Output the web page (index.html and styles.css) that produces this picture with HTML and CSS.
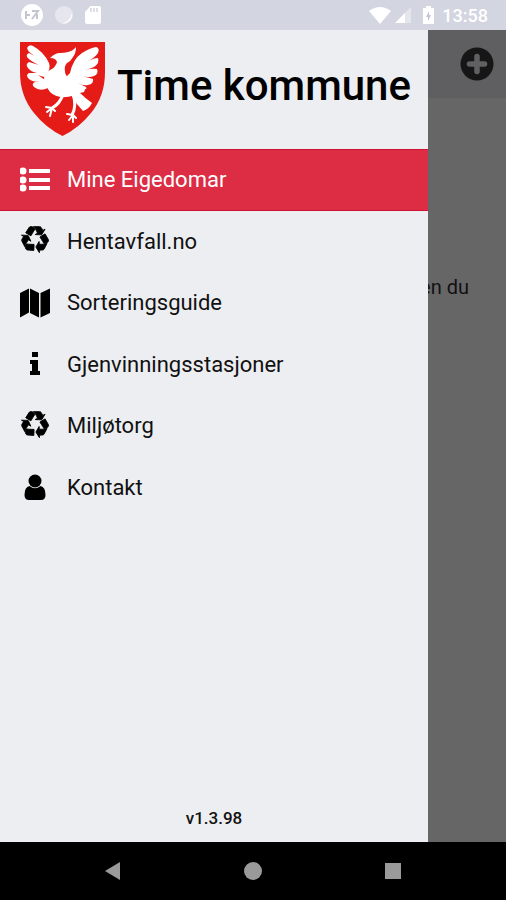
FILE: index.html
```html
<!DOCTYPE html>
<html lang="nn">
<head>
<meta charset="utf-8">
<meta name="viewport" content="width=device-width, initial-scale=1">
<title>Time kommune</title>
<link rel="stylesheet" href="styles.css">
</head>
<body>
<svg class="defs" aria-hidden="true">
  <symbol id="recycle" viewBox="-80 -30 1952 1952"><path stroke="#000" stroke-width="60" stroke-linejoin="round" d="M836 1169l-15 368-2 22-420-29q-36-3-67-31.5t-47-65.5q-11-27-14.5-55t4-65 12-55 21.5-64 19-53q78 12 509 28zm-387-586l180 379-147-92q-63 72-111.5 144.5t-72.5 125-39.5 94.5-18.500 63l-4 21-190-357q-17-26-18-56t6-47l8-18q35-63 114-188l-140-86zm1231 517l-188 359q-12 29-36.500 46.500t-43.500 20.500l-18 4q-71 7-219 12l8 164-230-367 211-362 7 173q170 16 283 5t170-33zm-785-924q-47 63-265 435l-317-187-19-12 225-356q20-31 60-45t80-10q24 2 48.500 12t42 21 41.500 33 36 34.500 36 39.500 32 35zm655 307l212 363q18 37 12.500 76t-27.500 74q-13 20-33 37t-38 28-48.500 22-47 16-51.500 14-46 12q-34-72-265-436l313-195zm-143-226l142-83-220 373-419-20 151-86q-34-89-75-166t-75.500-123.500-64.500-80-47-46.500l-17-13 405 1q31-3 58 10.500t39 28.500l11 15q39 61 112 190z"/></symbol>
</svg>
<div class="phone">
  <header class="status">
    <div class="status-group">
      <svg width="22" height="22" viewBox="0 0 22 22"><circle cx="11" cy="11" r="11" fill="#fff"/><path d="M5 7v8M5 11h4M11 7h6l-3 4M16 10v5M11 15l3-4" fill="none" stroke="#c3c5d2" stroke-width="2"/></svg>
      <svg width="18" height="18" viewBox="0 0 18 18"><circle cx="9" cy="9" r="9" fill="#e6e7ee"/><path d="M17 7a9 9 0 0 1-10 10.500Q15 16 17 7z" fill="#fff"/></svg>
      <svg width="16" height="18" viewBox="0 0 16 18"><path d="M5.500 0H14q2 0 2 2v14q0 2-2 2H2q-2 0-2-2V6z" fill="#fff"/><path d="M6 2v4M9 2v4M12 2v4" stroke="#d3d5e0" stroke-width="1.500"/></svg>
    </div>
    <div class="status-group status-right">
      <svg width="22" height="17" viewBox="0 0 22 17"><path d="M0 4Q11-4 22 4L11 17z" fill="#fff"/></svg>
      <svg width="16" height="16" viewBox="0 0 16 16"><path d="M16 0v16H0z" fill="#e5e6ed"/><path d="M10 6v10H0z" fill="#fff"/></svg>
      <svg class="battery" width="11" height="18" viewBox="0 0 11 18"><path d="M3 0h5v2h2q1 0 1 1v14q0 1-1 1H1q-1 0-1-1V3q0-1 1-1h2z" fill="#fff"/><path d="M6 5L3 11h2v4l3-6H6z" fill="#c3c5d2"/></svg>
      <time>13:58</time>
    </div>
  </header>
  <div class="app">
    <main class="page">
      <div class="toolbar">
        <button class="add" aria-label="Legg til">
          <svg width="34" height="34" viewBox="0 0 34 34"><circle cx="17" cy="17" r="16.500" fill="#161617"/><path d="M17 9.500v15M9.500 17h15" stroke="#606062" stroke-width="5.500" stroke-linecap="round"/></svg>
        </button>
      </div>
      <p class="message">en du</p>
    </main>
    <aside class="drawer">
      <div class="brand">
        <svg class="shield" width="87" height="96" viewBox="0 0 87 96">
          <path d="M1 1h85v30q0 24-14 41-12 15-28.500 23Q27 87 15 72 1 55 1 31z" fill="#e51b17"/>
          <g fill="#fff">
            <path d="M31 17q5-5 10-5 4 0 8-1 5-1 8-5 0 6-3 10-2 4-6 6-3 3-2 8 0 4 3 6l4 4 14 6-2 5-4 1q5 5 12 10-3 6-9 8-7-7-11-15-4 1-6 1-10 1-16-5-5-7-6-14 1-5 6-8 6-3 7-8-1-4-7-4z"/>
            <path d="M27 36q-4 0-8-2 5 4 8 5l2 8q-8 4-14-1-3-3 1-5h5q-8 0-11-3-4-4 0-6h8q-6-1-9-5-3-4 1-6l10 3q-9-4-12-8-1-3 2-4l10 5Q9 12 8 7q2-4 6-2 11 6 16 17 2 5-3 14z"/>
            <path d="M51 32q3-14 12-20 8-5 14-6 4 1 2 6-3 5-12 9 8-4 12-4 2 5-4 9-4 2-10 3 9-2 13-1 2 5-3 7-5 2-12 0 8 2 11 3 1 5-5 6-5 1-10-2l9 5q-5 4-12 2-9-4-12-10z"/>
          </g>
          <g fill="none" stroke="#fff" stroke-width="3" stroke-linecap="round" stroke-linejoin="round">
            <path d="M44 53q-3 10-11 14M54 53q4 12-1 21"/>
            <path stroke-width="2" d="M33 67l-6-1M33 67l-5 4M33 67l-2 8M33 67l3 3M54 74l-6-1M54 74l-4 5M54 74v7M54 74l3 3"/>
          </g>
        </svg>
        <h1>Time kommune</h1>
      </div>
      <nav class="menu">
        <a class="item active" href="#eigedomar">
          <svg class="icon" viewBox="0 0 30 30"><g fill="currentColor"><circle cx="3" cy="6" r="3.500"/><circle cx="3" cy="15" r="3.500"/><circle cx="3" cy="23" r="3.500"/><path d="M9 4h21v4H9zM9 13h21v4H9zM9 21h21v4H9z"/></g></svg>
          <span>Mine Eigedomar</span></a>
        <a class="item" href="#hentavfall"><svg class="icon"><use href="#recycle"/></svg><span>Hentavfall.no</span></a>
        <a class="item" href="#sortering">
          <svg class="icon" viewBox="0 0 30 30"><path d="M0 5l9-4.500v24L0 29.500zM10 .5l9 4.500v24.500L10 25zM20.500 5L30 .5V25l-9.500 4.500z"/></svg>
          <span>Sorteringsguide</span></a>
        <a class="item" href="#gjenvinning">
          <svg class="icon" viewBox="0 0 30 30"><path d="M12 3h6v5h-6zM10 11h8v11h2v4H10v-4h2v-7h-2z"/></svg>
          <span>Gjenvinningsstasjoner</span></a>
        <a class="item" href="#miljotorg"><svg class="icon"><use href="#recycle"/></svg><span>Miljøtorg</span></a>
        <a class="item" href="#kontakt">
          <svg class="icon" viewBox="0 0 30 30"><circle cx="15" cy="9" r="6.500"/><path d="M9.500 14Q15 18.500 20.500 14q5 1 5 9 0 5-4.500 5H9q-4.500 0-4.500-5 0-8 5-9z"/></svg>
          <span>Kontakt</span></a>
      </nav>
      <p class="version">v1.3.98</p>
    </aside>
  </div>
  <footer class="navbar">
    <button aria-label="Tilbake"><svg width="18" height="18" viewBox="0 0 18 18"><path d="M1 9L16 0v18z"/></svg></button>
    <button aria-label="Heim"><svg width="18" height="18" viewBox="0 0 18 18"><circle cx="9" cy="9" r="9"/></svg></button>
    <button aria-label="Oversikt"><svg width="18" height="18" viewBox="0 0 18 18"><path d="M1 1h16v16H1z"/></svg></button>
  </footer>
</div>
</body>
</html>
```
FILE: styles.css
```css
* { box-sizing: border-box; }
body { margin: 0; font-family: Roboto, "Liberation Sans", sans-serif; color: #111; }
h1, p { margin: 0; }
svg { display: block; flex: none; }
button { padding: 0; border: 0; background: none; }
.defs { position: absolute; width: 0; height: 0; }

.phone { display: flex; flex-direction: column; min-height: 100vh; }

.status {
  display: flex; align-items: center; justify-content: space-between;
  height: 30px; padding: 0 18px 0 21px; background: #d3d5e0; color: #fff;
}
.status-group { display: flex; align-items: center; gap: 12px; }
.status-right { gap: 4px; }
.battery { margin: 0 4px 0 8px; }
time { font-size: 18px; font-weight: 500; }

.app { position: relative; flex: 1; display: flex; }
.page { flex: 1; background: #666667; }
.toolbar {
  display: flex; align-items: center; justify-content: flex-end;
  height: 68px; padding-right: 12px; background: #5f5f61;
}
.message { padding: 175px 37px 0; font-size: 20px; line-height: 28px; text-align: right; }

.drawer {
  position: absolute; top: 0; bottom: 0; left: 0; width: 428px; max-width: 85%;
  display: flex; flex-direction: column;
  background: #edeef2;
}
.brand { display: flex; align-items: flex-start; gap: 11px; height: 119px; padding: 11px 0 0 19px; }
.brand h1 { padding-top: 20px; font-size: 42px; line-height: 50px; font-weight: 500; white-space: nowrap; color: #000; }

.menu { display: grid; grid-auto-rows: 1fr; min-height: 369px; }
.item {
  display: flex; align-items: center; gap: 17px; padding-left: 20px;
  color: #111; font-size: 22px; text-decoration: none;
}
.icon { width: 30px; height: 30px; fill: #000; }
.active { background: #dc2d45; border-top: 1px solid #d01035; border-bottom: 1px solid #d01035; color: #fff; }

.version { margin-top: auto; padding-bottom: 14px; font-size: 17px; line-height: 20px; font-weight: 500; text-align: center; }

.navbar { display: flex; justify-content: center; align-items: center; gap: 122px; height: 58px; background: #000; fill: #9a9a9a; }
```
